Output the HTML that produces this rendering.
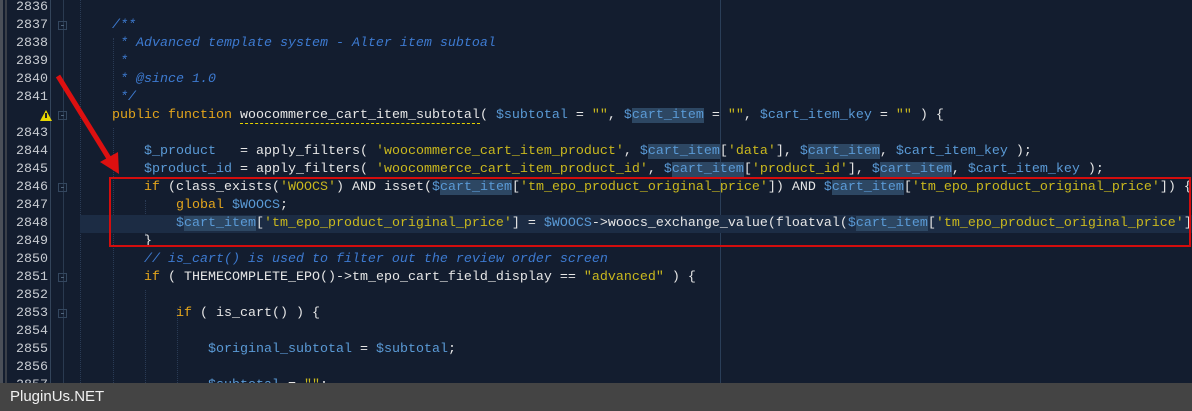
<!DOCTYPE html>
<html><head><meta charset="utf-8"><style>
body{margin:0;width:1192px;height:411px;overflow:hidden;background:#131d2f;position:relative;font-family:"Liberation Mono",monospace;}
.ln{position:absolute;left:0;width:48px;text-align:right;color:#c8ccd2;font-size:13.33px;height:18px;line-height:18px;margin-top:2px}
.c{position:absolute;left:80px;white-space:pre;font-size:13.33px;height:18px;line-height:18px;color:#e6e6e6;margin-top:2px}
.k{color:#e3a51c}.s{color:#c9b81e}.v{color:#5a9ad6}.h{background:#2d4763}.cm{color:#3d7ad0;font-style:italic}
.u{border-bottom:1px dashed #e6d200}
.fold{position:absolute;left:58px;width:9px;height:9px;border:1px solid #34475f;box-sizing:border-box;margin-top:2px}
.fold:after{content:"";position:absolute;left:2px;top:3px;width:3px;height:1px;background:#50647c}
</style></head><body>
<div style="position:absolute;left:0;top:0;width:3px;height:383px;background:#4a4f58"></div>
<div style="position:absolute;left:5px;top:0;width:2px;height:383px;background:#3a3f48"></div>
<div style="position:absolute;left:50px;top:0;width:1px;height:383px;background:#33445a"></div>
<div style="position:absolute;left:63px;top:0;width:1px;height:383px;background:#2a3a50"></div>
<div style="position:absolute;left:80px;top:0;height:383px;border-left:1px dotted #2a3b55"></div>
<div style="position:absolute;left:113px;top:38px;height:72px;border-left:1px dotted #2a3b55"></div>
<div style="position:absolute;left:113px;top:128px;height:257px;border-left:1px dotted #2a3b55"></div>
<div style="position:absolute;left:145px;top:200px;height:36px;border-left:1px dotted #2a3b55"></div>
<div style="position:absolute;left:145px;top:290px;height:95px;border-left:1px dotted #2a3b55"></div>
<div style="position:absolute;left:177px;top:308px;height:77px;border-left:1px dotted #2a3b55"></div>
<div style="position:absolute;left:720px;top:0;width:1px;height:383px;background:#2a3e58"></div>
<div style="position:absolute;left:80px;top:215px;width:1112px;height:18px;background:#1c2c44"></div>

<div class="fold" style="top:19px"></div>
<div class="fold" style="top:109px"></div>
<div class="fold" style="top:181px"></div>
<div class="fold" style="top:271px"></div>
<div class="fold" style="top:307px"></div>
<div style="position:absolute;left:40px;top:110px;width:0;height:0;border-left:6px solid transparent;border-right:6px solid transparent;border-bottom:11px solid #e8d800"></div>
<div style="position:absolute;left:45px;top:113px;width:2px;height:5px;background:#222"></div>

<div class="ln" style="top:-3px">2836</div>
<div class="ln" style="top:15px">2837</div><div class="c" style="top:15px"><span class="cm">    /**</span></div>
<div class="ln" style="top:33px">2838</div><div class="c" style="top:33px"><span class="cm">     * Advanced template system - Alter item subtoal</span></div>
<div class="ln" style="top:51px">2839</div><div class="c" style="top:51px"><span class="cm">     *</span></div>
<div class="ln" style="top:69px">2840</div><div class="c" style="top:69px"><span class="cm">     * @since 1.0</span></div>
<div class="ln" style="top:87px">2841</div><div class="c" style="top:87px"><span class="cm">     */</span></div>
<div class="c" style="top:105px">    <span class="k">public function</span> <span class="u">woocommerce_cart_item_subtotal</span>( <span class="v">$subtotal</span> = <span class="s">""</span>, <span class="v">$<span class="h">cart_item</span></span> = <span class="s">""</span>, <span class="v">$cart_item_key</span> = <span class="s">""</span> ) {</div>
<div class="ln" style="top:123px">2843</div>
<div class="ln" style="top:141px">2844</div><div class="c" style="top:141px">        <span class="v">$_product</span>   = apply_filters( <span class="s">'woocommerce_cart_item_product'</span>, <span class="v">$<span class="h">cart_item</span></span>[<span class="s">'data'</span>], <span class="v">$<span class="h">cart_item</span></span>, <span class="v">$cart_item_key</span> );</div>
<div class="ln" style="top:159px">2845</div><div class="c" style="top:159px">        <span class="v">$product_id</span> = apply_filters( <span class="s">'woocommerce_cart_item_product_id'</span>, <span class="v">$<span class="h">cart_item</span></span>[<span class="s">'product_id'</span>], <span class="v">$<span class="h">cart_item</span></span>, <span class="v">$cart_item_key</span> );</div>
<div class="ln" style="top:177px">2846</div><div class="c" style="top:177px">        <span class="k">if</span> (class_exists(<span class="s">'WOOCS'</span>) AND isset(<span class="v">$<span class="h">cart_item</span></span>[<span class="s">'tm_epo_product_original_price'</span>]) AND <span class="v">$<span class="h">cart_item</span></span>[<span class="s">'tm_epo_product_original_price'</span>]) {</div>
<div class="ln" style="top:195px">2847</div><div class="c" style="top:195px">            <span class="k">global</span> <span class="v">$WOOCS</span>;</div>
<div class="ln" style="top:213px">2848</div><div class="c" style="top:213px">            <span class="v">$<span class="h">cart_item</span></span>[<span class="s">'tm_epo_product_original_price'</span>] = <span class="v">$WOOCS</span>-&gt;woocs_exchange_value(floatval(<span class="v">$<span class="h">cart_item</span></span>[<span class="s">'tm_epo_product_original_price'</span>]</div>
<div class="ln" style="top:231px">2849</div><div class="c" style="top:231px">        }</div>
<div class="ln" style="top:249px">2850</div><div class="c" style="top:249px"><span class="cm">        // is_cart() is used to filter out the review order screen</span></div>
<div class="ln" style="top:267px">2851</div><div class="c" style="top:267px">        <span class="k">if</span> ( THEMECOMPLETE_EPO()-&gt;tm_epo_cart_field_display == <span class="s">"advanced"</span> ) {</div>
<div class="ln" style="top:285px">2852</div>
<div class="ln" style="top:303px">2853</div><div class="c" style="top:303px">            <span class="k">if</span> ( is_cart() ) {</div>
<div class="ln" style="top:321px">2854</div>
<div class="ln" style="top:339px">2855</div><div class="c" style="top:339px">                <span class="v">$original_subtotal</span> = <span class="v">$subtotal</span>;</div>
<div class="ln" style="top:357px">2856</div>
<div class="ln" style="top:375px">2857</div><div class="c" style="top:375px">                <span class="v">$subtotal</span> = <span class="s">""</span>;</div>

<div style="position:absolute;left:109px;top:177px;width:1082px;height:70px;border:2px solid #d40d0d;box-sizing:border-box"></div>
<svg style="position:absolute;left:0;top:0" width="1192" height="411">
<line x1="58" y1="76" x2="110" y2="160" stroke="#dd1010" stroke-width="5"/>
<polygon points="119,174 100,162 118,152" fill="#dd1010"/>
</svg>
<div style="position:absolute;left:0;top:383px;width:1192px;height:28px;background:#444444;color:#f0f0f0;font-family:'Liberation Sans',sans-serif;font-size:15px;line-height:28px;padding-left:10px;box-sizing:border-box">PluginUs.NET</div>
</body></html>
